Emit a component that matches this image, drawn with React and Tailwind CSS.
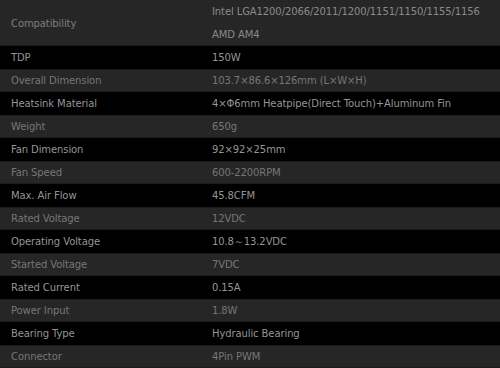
import React from 'react';

const specs = [
  ['TDP', '150W'],
  ['Overall Dimension', '103.7×86.6×126mm (L×W×H)'],
  ['Heatsink Material', '4×Φ6mm Heatpipe(Direct Touch)+Aluminum Fin'],
  ['Weight', '650g'],
  ['Fan Dimension', '92×92×25mm'],
  ['Fan Speed', '600-2200RPM'],
  ['Max. Air Flow', '45.8CFM'],
  ['Rated Voltage', '12VDC'],
  ['Operating Voltage', '10.8～13.2VDC'],
  ['Started Voltage', '7VDC'],
  ['Rated Current', '0.15A'],
  ['Power Input', '1.8W'],
  ['Bearing Type', 'Hydraulic Bearing'],
  ['Connector', '4Pin PWM'],
];

const App = () => {
  return (
    <div
      className="w-[500px] h-[368px] overflow-hidden bg-black text-[10px] tracking-[-0.1px]"
      style={{ fontFamily: '"DejaVu Sans", Verdana, sans-serif' }}
    >
      {/* first row spans two lines */}
      <div className="grid grid-cols-[201px_1fr] h-[46px] bg-[#262626] text-[#7f7f7f] border-b border-[#1c1c1c]">
        <div className="flex items-center pl-[11px]">Compatibility</div>
        <div className="flex flex-col pl-[11px] text-[#8a8a8a]">
          <div className="h-[23px] flex items-center">Intel LGA1200/2066/2011/1200/1151/1150/1155/1156</div>
          <div className="h-[23px] flex items-center">AMD AM4</div>
        </div>
      </div>
      {specs.map(([label, value], i) => {
        const dark = i % 2 === 0;
        return (
          <div
            key={label}
            className={
              dark
                ? 'grid grid-cols-[201px_1fr] h-[23px] items-center bg-black text-[#959595]'
                : 'grid grid-cols-[201px_1fr] h-[23px] items-center bg-[#262626] text-[#767676] border-y border-[#1c1c1c]'
            }
          >
            <div className="pl-[11px]">{label}</div>
            <div className="pl-[11px]">{value}</div>
          </div>
        );
      })}
    </div>
  );
};

export default App;
